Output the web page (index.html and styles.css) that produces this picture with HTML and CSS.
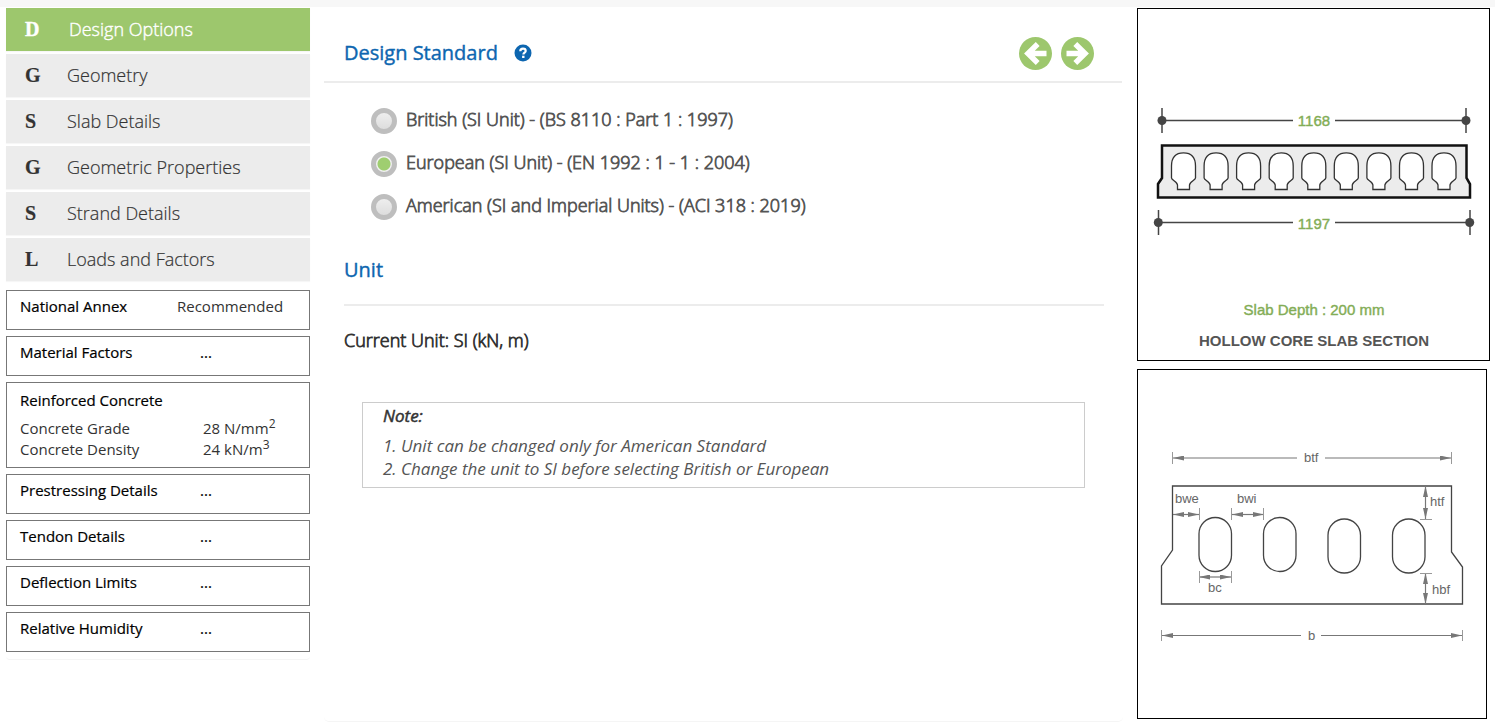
FILE: index.html
```
<!DOCTYPE html>
<html lang="en">
<head>
<meta charset="utf-8">
<meta name="viewport" content="width=device-width, initial-scale=1">
<title>Design Options</title>
<link rel="stylesheet" href="styles.css">
</head>
<body>
<div class="layout">
  <aside class="sidebar">
    <nav class="menu">
      <a class="menu-item active" href="#design"><b class="initial">D</b><span>Design Options</span></a>
      <a class="menu-item" href="#geometry"><b class="initial">G</b><span>Geometry</span></a>
      <a class="menu-item" href="#slab"><b class="initial">S</b><span>Slab Details</span></a>
      <a class="menu-item" href="#properties"><b class="initial">G</b><span>Geometric Properties</span></a>
      <a class="menu-item" href="#strand"><b class="initial">S</b><span>Strand Details</span></a>
      <a class="menu-item" href="#loads"><b class="initial">L</b><span>Loads and Factors</span></a>
    </nav>
    <div class="summary">
      <section class="box"><h3>National Annex</h3><p class="annex">Recommended</p></section>
      <section class="box"><h3>Material Factors</h3><p class="more">...</p></section>
      <section class="box concrete">
        <h3>Reinforced Concrete</h3>
        <dl>
          <dt>Concrete Grade</dt><dd>28 N/mm<sup>2</sup></dd>
          <dt>Concrete Density</dt><dd>24 kN/m<sup>3</sup></dd>
        </dl>
      </section>
      <section class="box"><h3>Prestressing Details</h3><p class="more">...</p></section>
      <section class="box"><h3>Tendon Details</h3><p class="more">...</p></section>
      <section class="box"><h3>Deflection Limits</h3><p class="more">...</p></section>
      <section class="box"><h3>Relative Humidity</h3><p class="more">...</p></section>
    </div>
  </aside>

  <main class="panel">
    <header class="panel-head">
      <h1 class="title">Design Standard</h1>
      <button class="help" type="button" aria-label="Help">
        <svg viewBox="0 0 18 18"><circle cx="9" cy="9" r="8.5" fill="#0d66b0"/><path d="M6.3 7.2C6.3 5.4 7.5 4.6 9 4.6s2.7.9 2.7 2.3c0 1.7-2.3 1.8-2.3 3.5" fill="none" stroke="#fff" stroke-width="2.2"/><path d="M8.1 11.7h2.4V14H8.1z" fill="#fff"/></svg>
      </button>
      <div class="arrows">
        <button type="button" aria-label="Previous">
          <svg viewBox="0 0 33 33"><circle cx="16.5" cy="16.5" r="16.5" fill="#9dc76d"/><path d="M27.500 16.500H11M18.700 7L9 16.500l9.700 9.500" fill="none" stroke="#fff" stroke-width="5.500"/></svg>
        </button>
        <button type="button" aria-label="Next">
          <svg viewBox="0 0 33 33"><circle cx="16.500" cy="16.500" r="16.500" fill="#9dc76d"/><path d="M5.500 16.500H22M14.300 7l9.700 9.500-9.700 9.500" fill="none" stroke="#fff" stroke-width="5.500"/></svg>
        </button>
      </div>
    </header>
    <fieldset class="standards" aria-label="Design Standard">
      <label><input type="radio" name="standard">British (SI Unit) - (BS 8110 : Part 1 : 1997)</label>
      <label><input type="radio" name="standard" checked>European (SI Unit) - (EN 1992 : 1 - 1 : 2004)</label>
      <label><input type="radio" name="standard">American (SI and Imperial Units) - (ACI 318 : 2019)</label>
    </fieldset>
    <section class="unit">
      <h2 class="title">Unit</h2>
      <p class="current">Current Unit: SI (kN, m)</p>
      <div class="note">
        <h3>Note:</h3>
        <p>1. Unit can be changed only for American Standard</p>
        <p>2. Change the unit to SI before selecting British or European</p>
      </div>
    </section>
  </main>

  <aside class="drawings">
    <figure class="drawing">
      <svg viewBox="1138 9 351 351" role="img" aria-label="Hollow core slab section">
        <defs><path id="core" d="M1171.500 166C1171.500 157 1176 152.800 1183.500 152.800S1195.500 157 1195.500 166V178C1195.500 180 1189.500 182 1189.500 185V189.500H1177.500V185C1177.500 182 1171.500 180 1171.500 178Z"/></defs>
        <g stroke="#454545" stroke-width="1.500">
          <path d="M1162 120.500H1293M1335 120.500H1466M1158 222.500H1293M1335 222.500H1470"/>
          <path d="M1162 108v25M1466 108v25M1158.500 210v25M1470 210v25"/>
        </g>
        <g fill="#454545"><circle cx="1162" cy="120.500" r="4.500"/><circle cx="1466" cy="120.500" r="4.500"/><circle cx="1158.300" cy="222.500" r="4.500"/><circle cx="1469.700" cy="222.500" r="4.500"/></g>
        <path d="M1162 145.500H1466.500V178L1470 184V197.500H1158V184L1162 178Z" fill="#ececec" stroke="#111" stroke-width="2.500"/>
        <g fill="#fff" stroke="#333" stroke-width="1.300">
          <use href="#core"/><use href="#core" x="32.600"/><use href="#core" x="65.100"/><use href="#core" x="97.700"/><use href="#core" x="130.300"/><use href="#core" x="162.800"/><use href="#core" x="195.400"/><use href="#core" x="228"/><use href="#core" x="260.500"/>
        </g>
        <g class="slab-text">
          <text class="green" x="1314" y="126">1168</text>
          <text class="green" x="1314" y="229">1197</text>
          <text class="green" x="1314" y="315">Slab Depth : 200 mm</text>
          <text class="caption" x="1314" y="346">HOLLOW CORE SLAB SECTION</text>
        </g>
      </svg>
    </figure>
    <figure class="drawing key">
      <svg viewBox="1138 370 348 348" role="img" aria-label="Slab dimension key">
        <defs>
          <marker id="arrow" viewBox="0 0 11 5" refX="11" refY="2.500" markerWidth="11" markerHeight="5" markerUnits="userSpaceOnUse" orient="auto-start-reverse"><path d="M0 0L11 2.500L0 5Z" fill="#777"/></marker>
        </defs>
        <g fill="none" stroke="#444" stroke-width="1.300">
          <path d="M1172.500 486H1451.500V552L1462.500 567V604H1161.500V566L1172.500 550Z"/>
          <rect x="1199" y="517.500" width="32.500" height="54" rx="16.200"/>
          <rect x="1263.500" y="517.500" width="32.500" height="54" rx="16.200"/>
          <rect x="1328" y="519" width="32.500" height="54" rx="16.200"/>
          <rect x="1392.500" y="519" width="32.500" height="54" rx="16.200"/>
        </g>
        <g stroke="#777" stroke-width="1.200">
          <path marker-end="url(#arrow)" d="M1297 458H1173"/>
          <path marker-end="url(#arrow)" d="M1325 458H1451"/>
          <path marker-end="url(#arrow)" d="M1301 635.500H1162"/>
          <path marker-end="url(#arrow)" d="M1321 635.500H1462"/>
          <path marker-start="url(#arrow)" marker-end="url(#arrow)" d="M1173 514.500H1199"/>
          <path marker-start="url(#arrow)" marker-end="url(#arrow)" d="M1232 514.500H1264"/>
          <path marker-start="url(#arrow)" marker-end="url(#arrow)" d="M1199 577H1231"/>
          <path marker-start="url(#arrow)" marker-end="url(#arrow)" d="M1425.500 486V519"/>
          <path marker-start="url(#arrow)" marker-end="url(#arrow)" d="M1425.500 573V604"/>
        </g>
        <path d="M1172.500 452v12M1451.500 452v12M1161.500 630v11M1462.500 630v11M1199.500 508v12M1231.500 508v12M1263.500 508v12M1199.500 571v12M1231.500 571v12M1420 519.500h12M1420 573.500h12" stroke="#999"/>
        <g class="key-text">
          <text x="1304" y="462">btf</text><text x="1175" y="503">bwe</text><text x="1237" y="503">bwi</text><text x="1430" y="506">htf</text><text x="1208" y="592">bc</text><text x="1432" y="594">hbf</text><text x="1308" y="640">b</text>
        </g>
      </svg>
    </figure>
  </aside>
</div>
</body>
</html>
```
FILE: styles.css
```
* { box-sizing: border-box; }
body {
  margin: 0;
  border-top: 7px solid #f7f7f7;
  background: #fff;
  color: #333;
  font-family: "Open Sans", sans-serif;
  font-weight: 400;
}
h1, h2, h3, p, dl, dd, figure { margin: 0; }
button { padding: 0; border: 0; background: none; cursor: pointer; }
svg { display: block; width: 100%; }

.layout {
  display: grid;
  grid-template-columns: 304px 1fr 353px;
  gap: 14px;
  padding: 1px 5px 0 6px;
}

.menu { display: grid; gap: 3px; }
.menu-item {
  display: grid;
  grid-template-columns: 42px 1fr;
  align-items: center;
  height: 43px;
  padding: 0 0 2px 19px;
  background: #ececec;
  box-shadow: 0 1px 1px #f6f6f6;
  color: #333;
  font-size: 18px;
  font-weight: 300;
  text-decoration: none;
  -webkit-text-stroke: 0.2px;
}
.menu-item.active { grid-template-columns: 44px 1fr; background: #9dc76d; color: #fff; -webkit-text-stroke: 0.4px; }
.initial { padding-top: 2px; font: bold 20px "Liberation Serif", serif; }

.summary {
  display: grid;
  gap: 6px;
  margin-top: 9px;
  padding-bottom: 7px;
  border-bottom: 1px solid #f5f5f5;
  border-radius: 4px;
}
.box {
  display: grid;
  grid-template-columns: 157px 1fr;
  height: 40px;
  padding: 5px 13px 0;
  border: 1px solid #777;
  color: #000;
  font-size: 15px;
  line-height: 20px;
}
.box h3 { font-size: 15px; font-weight: 400; -webkit-text-stroke: 0.2px; white-space: nowrap; }
.annex, .concrete dl { color: #333; }
.more { padding-left: 23px; -webkit-text-stroke: 0.2px; }
.concrete { display: block; height: auto; padding: 7px 13px 7px; }
.concrete dl {
  display: grid;
  grid-template-columns: 183px 1fr;
  margin-top: 8px;
  line-height: 21px;
}
.concrete sup { font-size: 12px; line-height: 0; }
.concrete ~ .box { margin-bottom: 0; }

.panel {
  margin-top: -1px;
  min-height: 715px;
  border-bottom: 1px solid #f5f5f5;
  border-radius: 5px;
}
.panel-head {
  display: flex;
  align-items: center;
  height: 76px;
  margin-right: 1px;
  padding: 18px 28px 0 20px;
  border-bottom: 2px solid #ececec;
}
.title { color: #0d66b0; font-size: 20px; font-weight: 400; line-height: 28px; -webkit-text-stroke: 0.4px; }
.help { width: 18px; height: 18px; margin-left: 16px; }
.arrows { display: flex; gap: 9px; margin-left: auto; }
.arrows button { width: 33px; height: 33px; }
.standards {
  display: grid;
  gap: 17px;
  margin: 0;
  padding: 25px 0 0 47px;
  border: 0;
}
.standards label {
  display: flex;
  gap: 9px;
  height: 26px;
  color: #555;
  font-size: 18px;
  font-weight: 300;
  line-height: 22px;
  -webkit-text-stroke: 0.8px;
}
.standards input {
  appearance: none;
  width: 26px;
  height: 26px;
  margin: 0;
  border: 5px solid #bebebe;
  border-radius: 50%;
  background: linear-gradient(#eee, #ddd);
}
.standards input:checked { background: radial-gradient(circle, #9fce70 0 6px, #f0f0f0 7px); }
.unit { padding: 36px 19px 0 20px; }
.unit .title { padding-bottom: 20px; border-bottom: 2px solid #ececec; }
.current { margin-top: 22px; font-size: 18px; font-weight: 300; line-height: 24px; -webkit-text-stroke: 0.8px; }
.note {
  margin: 50px 19px 0 18px;
  padding: 1px 20px 7px;
  border: 1px solid #ccc;
  font-size: 17px;
  font-style: italic;
  line-height: 23px;
}
.note p { color: #555; }
.note h3 { margin-bottom: 7px; font-size: 17px; font-weight: 400; -webkit-text-stroke: 0.5px; }

.drawings { display: grid; gap: 8px; align-content: start; }
.drawing { border: 1px solid #000; }
.key { margin-right: 3px; }
.slab-text { font-family: "Liberation Sans", Arial, sans-serif; font-size: 15px; text-anchor: middle; }
.green { fill: #83ad56; stroke: #83ad56; stroke-width: 0.4px; }
.caption { fill: #555; font-weight: bold; }
.key-text { fill: #666; font-family: "Liberation Sans", Arial, sans-serif; font-size: 13px; }
```
